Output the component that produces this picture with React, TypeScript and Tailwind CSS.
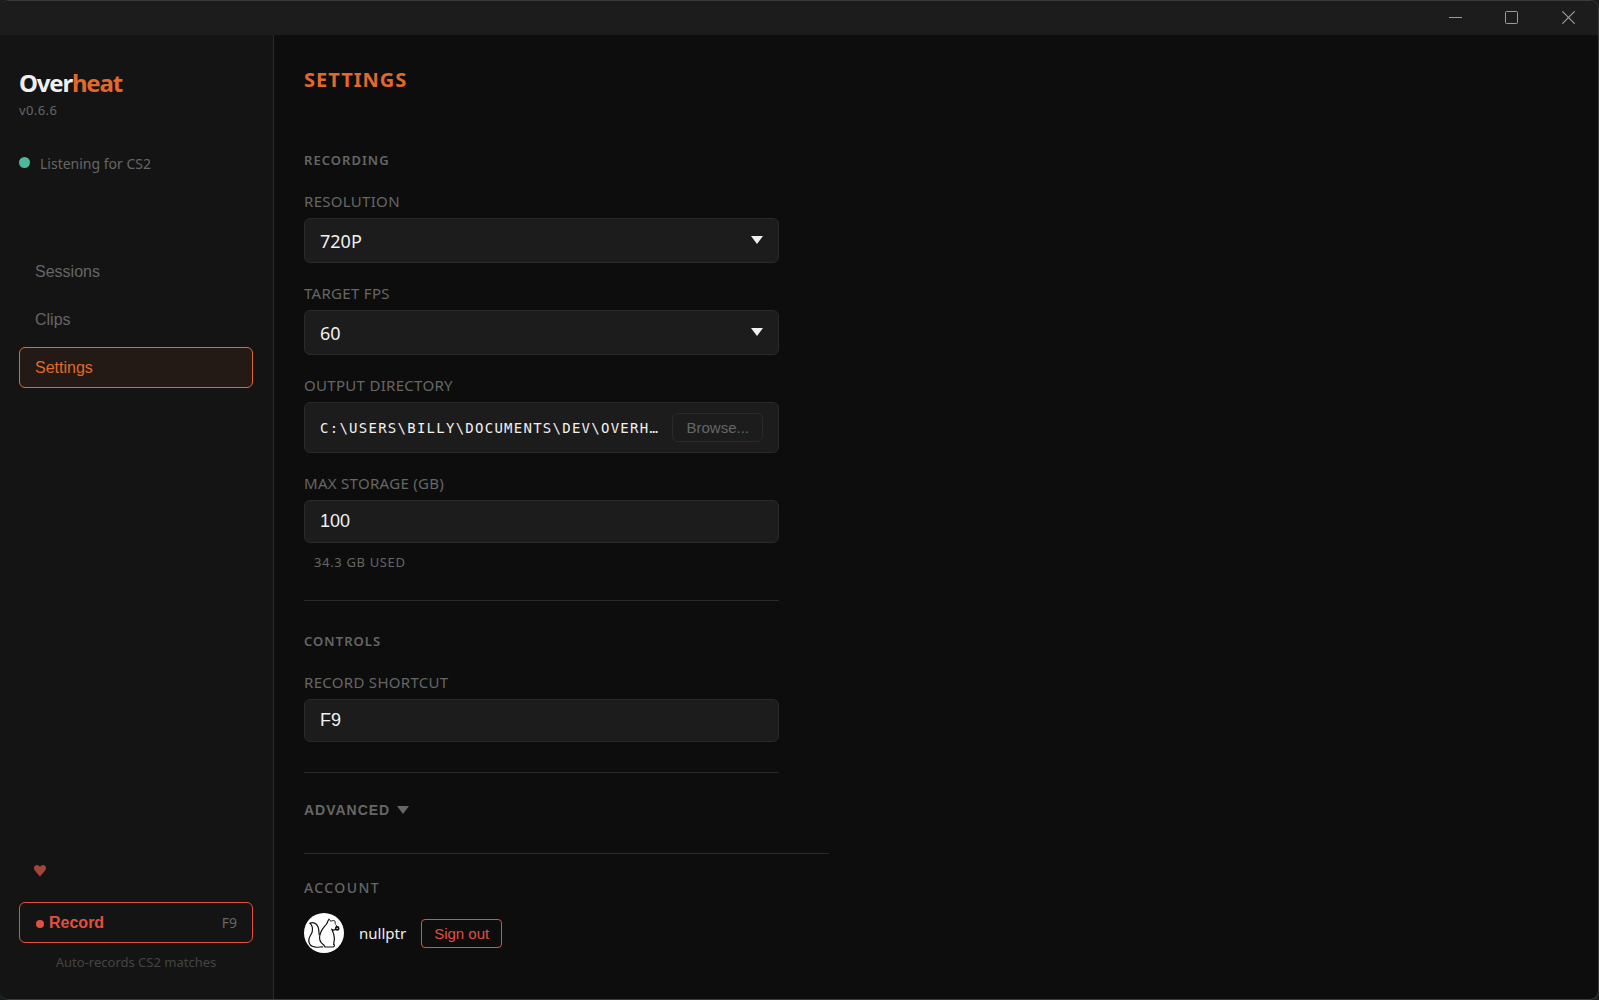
import { useState, type ReactNode } from 'react'

type Page = 'Sessions' | 'Clips' | 'Settings'

const PAGES: Page[] = ['Sessions', 'Clips', 'Settings']
const RESOLUTIONS = ['720P', '1080P', '1440P']
const FPS_OPTIONS = ['30', '60', '120']

const arial = "font-['Liberation_Sans',Arial,sans-serif]"
const inputClass = `h-[43px] w-full rounded-md border border-[#2a2a2a] bg-[#1c1c1c] px-[15px] text-lg text-[#f0f0f0] outline-none ${arial}`

function TitleBar() {
  return (
    <header className="flex h-[34px] shrink-0 items-center justify-end bg-[#1c1c1c] pr-px pb-0.5 text-[#9a9a9a]">
      <button aria-label="Minimize" className="flex h-full w-14 items-center justify-center">
        <svg width="13" height="13" viewBox="0 0 13 13" stroke="currentColor" fill="none">
          <path d="M0 6.5h13" />
        </svg>
      </button>
      <button aria-label="Maximize" className="flex h-full w-14 items-center justify-center">
        <svg width="13" height="13" viewBox="0 0 13 13" stroke="currentColor" fill="none">
          <rect x="0.5" y="0.5" width="12" height="12" rx="1" />
        </svg>
      </button>
      <button aria-label="Close" className="flex h-full w-[58px] items-center justify-center">
        <svg width="13" height="13" viewBox="0 0 13 13" stroke="currentColor" strokeWidth="1.2" fill="none">
          <path d="M0.3 0.3l12.4 12.4M12.7 0.3L0.3 12.7" />
        </svg>
      </button>
    </header>
  )
}

function Sidebar({ page, onSelect }: { page: Page; onSelect: (p: Page) => void }) {
  return (
    <aside className="flex w-[274px] shrink-0 flex-col border-r border-[#2a2a2a] bg-[#141414] pt-8 pr-5 pb-[27px] pl-[19px]">
      <h1 className="text-2xl font-bold tracking-tighter text-[#f0f0f0]">
        Over<span className="text-[#e0692e]">heat</span>
      </h1>
      <p className="mt-px text-[13px] leading-5 tracking-[0.03em] text-[#666]">v0.6.6</p>

      <div className="mt-[34px] flex items-start gap-2.5 text-sm leading-5 text-[#666]">
        <span className="mt-[3px] size-[11px] rounded-full bg-[#4db89e]" />
        Listening for CS2
      </div>

      <nav className={`mt-[77px] flex flex-col gap-[7px] ${arial}`}>
        {PAGES.map(p => (
          <button
            key={p}
            onClick={() => onSelect(p)}
            className={`h-[41px] rounded-md border px-[15px] text-left text-base ${
              p === page
                ? 'border-[#e0692e] bg-[#241a15] text-[#e0692e]'
                : 'border-transparent text-[#666]'
            }`}
          >
            {p}
          </button>
        ))}
      </nav>

      <button aria-label="Support" className="mt-auto flex h-5 w-11 items-center justify-start pl-[15px]">
        <svg width="12" height="12" viewBox="0 0 12 12" fill="#a4453a">
          <path d="M6 12C5.200 9.500 0 6.200 0 3 0 1.200 1.300 0 3 0c1.400 0 2.500.9 3 2.200C6.500.9 7.600 0 9 0c1.700 0 3 1.200 3 3 0 3.200-5.200 6.500-6 9z" />
        </svg>
      </button>

      <button className="mt-[21px] flex h-[41px] items-center rounded-md border border-[#e05040] px-[15px] text-[#e05040]">
        <span className="mt-0.5 ml-px size-2 rounded-full bg-[#e05040]" />
        <span className={`ml-[5px] text-base font-bold ${arial}`}>Record</span>
        <span className="ml-auto text-sm text-[#666]">F9</span>
      </button>
      <p className="mt-[9px] text-center text-[13px] leading-5 text-[#444]">Auto-records CS2 matches</p>
    </aside>
  )
}

function SectionTitle({ children }: { children: ReactNode }) {
  return <h3 className="text-[13px] leading-5 font-semibold tracking-[0.08em] text-[#666]">{children}</h3>
}

function Field({ id, label, children }: { id: string; label: string; children: ReactNode }) {
  return (
    <div className="flex flex-col gap-[7px]">
      <label htmlFor={id} className="text-[15px] leading-5 tracking-[0.02em] text-[#666]">
        {label}
      </label>
      {children}
    </div>
  )
}

function Select({ id, value, options, onChange }: {
  id: string
  value: string
  options: string[]
  onChange: (v: string) => void
}) {
  return (
    <div className="relative">
      <select
        id={id}
        value={value}
        onChange={e => onChange(e.target.value)}
        className="h-[45px] w-full appearance-none rounded-md border border-[#2a2a2a] bg-[#1c1c1c] px-[15px] text-lg text-[#f0f0f0] outline-none"
      >
        {options.map(o => (
          <option key={o}>{o}</option>
        ))}
      </select>
      <svg className="pointer-events-none absolute top-[18px] right-4" width="12" height="8" viewBox="0 0 12 8" fill="#f0f0f0">
        <path d="M0 0h12L6 8z" />
      </svg>
    </div>
  )
}

function Avatar() {
  return (
    <svg width="40" height="40" viewBox="0 0 40 40" role="img" aria-label="nullptr avatar">
      <circle cx="20" cy="20" r="20" fill="#fff" />
      <g fill="none" stroke="#111" strokeWidth="1.200" strokeLinecap="round" strokeLinejoin="round">
        <path d="M6 10.200c3-1.200 6.500-.2 8 3.600 1.200 3 .8 5.500 1.200 7.800" />
        <path d="M6 10.200c2.300 2.500 3 5.600 2.200 8.600-.8 3-3.400 4.800-3.400 8.600 0 3.800 2.700 6.300 7 6.800 2.300.2 4.800-.4 6.800-.4" />
        <path d="M25 6.300c-1.600 1.700-1.300 3.200-2.400 4.700-1.500 2-4.200 4.200-5.800 8.200-1.500 3.700-1.800 7.800.4 10.500 1.500 1.800 3.200 2 3.800 4.300h7.600c1.800 0 2.400-1.600 1.200-2.600" />
        <path d="M25 6.300c1 .6 1.400 1.200 1.800 2 1.400-.8 2.600-.9 4.200-.3.300 1.500-.2 2.200.6 3.400.6 1 1.600 1.700 1.400 2.800" strokeWidth="0.900" strokeDasharray="2 .8" />
        <path d="M28 16.800c1.300 2.600 2.400 5.600 2.400 8.600 0 2.300-.8 4.400-.6 6M31.500 16.500c-1.400.8-2.600.8-3.800-.3" />
      </g>
      <circle cx="33.200" cy="15.400" r="1.500" fill="none" stroke="#111" strokeWidth="1.700" />
    </svg>
  )
}

export default function App() {
  const [page, setPage] = useState<Page>('Settings')
  const [resolution, setResolution] = useState('720P')
  const [fps, setFps] = useState('60')
  const [maxStorage, setMaxStorage] = useState('100')
  const [shortcut, setShortcut] = useState('F9')

  return (
    <div className="h-screen bg-[#1a1e1e] font-['Noto_Sans','Open_Sans',sans-serif]">
      <div className="flex h-full flex-col overflow-hidden rounded-[9px] border border-l-0 border-[#3c3c3c] bg-[#0d0d0d]">
        <TitleBar />

        <div className="flex min-h-0 flex-1">
          <Sidebar page={page} onSelect={setPage} />

          <main className="min-w-0 flex-1 overflow-hidden px-[30px] pt-[31px]">
            <h2 className="text-xl font-bold tracking-wider text-[#e0692e]">SETTINGS</h2>

            <div className="mt-14 max-w-[475px]">
              {/* Recording */}
              <section className="border-b border-[#2a2a2a] pb-7">
                <SectionTitle>RECORDING</SectionTitle>
                <div className="mt-[21px] flex flex-col gap-5">
                  <Field id="resolution" label="RESOLUTION">
                    <Select id="resolution" value={resolution} options={RESOLUTIONS} onChange={setResolution} />
                  </Field>
                  <Field id="fps" label="TARGET FPS">
                    <Select id="fps" value={fps} options={FPS_OPTIONS} onChange={setFps} />
                  </Field>
                  <Field id="browse" label="OUTPUT DIRECTORY">
                    <div className="flex h-[51px] items-center gap-2.5 rounded-md border border-[#2a2a2a] bg-[#1c1c1c] px-[15px]">
                      <span className="min-w-0 flex-1 truncate font-['DejaVu_Sans_Mono',monospace] text-sm tracking-[0.09em] text-[#f0f0f0]">
                        C:\USERS\BILLY\DOCUMENTS\DEV\OVERH…
                      </span>
                      <button
                        id="browse"
                        className={`h-[29px] rounded-md border border-[#2a2a2a] px-[13px] text-[15px] leading-none text-[#666] ${arial}`}
                      >
                        Browse...
                      </button>
                    </div>
                  </Field>
                  <Field id="storage" label="MAX STORAGE (GB)">
                    <input
                      id="storage"
                      value={maxStorage}
                      onChange={e => setMaxStorage(e.target.value)}
                      className={inputClass}
                    />
                  </Field>
                </div>
                <p className="mt-[9px] pl-2.5 text-[13px] leading-5 tracking-wider text-[#666]">34.3 GB USED</p>
              </section>

              {/* Controls */}
              <section className="border-b border-[#2a2a2a] py-[30px]">
                <SectionTitle>CONTROLS</SectionTitle>
                <div className="mt-[21px]">
                  <Field id="shortcut" label="RECORD SHORTCUT">
                    <input
                      id="shortcut"
                      value={shortcut}
                      onChange={e => setShortcut(e.target.value)}
                      className={inputClass}
                    />
                  </Field>
                </div>
              </section>

              <button className={`mt-[27px] flex items-center gap-[7px] text-sm leading-5 font-bold tracking-[0.07em] text-[#666] ${arial}`}>
                ADVANCED
                <svg width="12" height="8" viewBox="0 0 12 8" fill="currentColor">
                  <path d="M0 0h12L6 8z" />
                </svg>
              </button>
            </div>

            {/* Account */}
            <section className="mt-[33px] max-w-[525px] border-t border-[#2a2a2a] pt-6">
              <h3 className="text-sm leading-5 font-medium tracking-widest text-[#666]">ACCOUNT</h3>
              <div className="mt-[15px] flex items-center gap-[15px]">
                <Avatar />
                <span className="text-[15px] text-[#f0f0f0]">nullptr</span>
                <button className={`h-[29px] rounded border border-[#e05040] px-3 text-[15px] leading-none text-[#e05040] ${arial}`}>
                  Sign out
                </button>
              </div>
            </section>
          </main>
        </div>
      </div>
    </div>
  )
}
